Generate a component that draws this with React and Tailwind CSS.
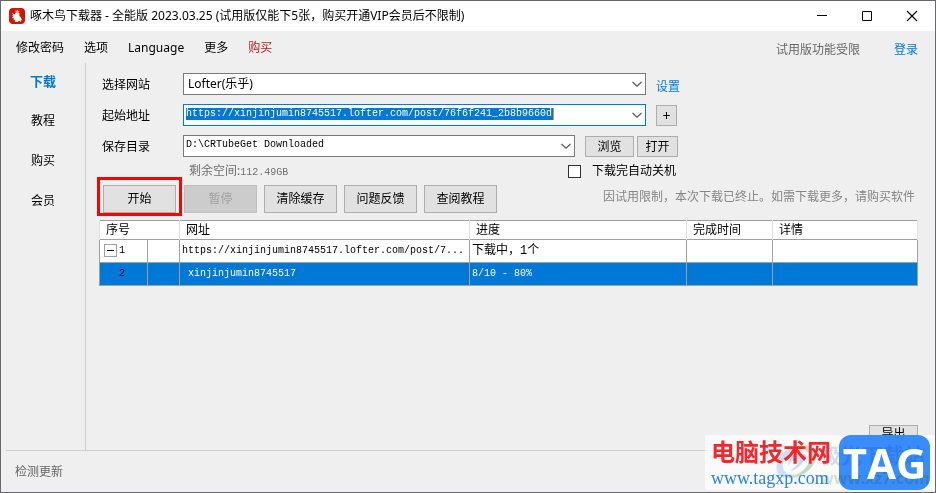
import React from "react";

const mono = "font-['Liberation_Mono','Noto_Sans_CJK_SC',monospace] text-[10px]";
const buttonLook = "border border-[#adadad] bg-[#e1e1e1] text-center text-black";

function Chevron() {
  return (
    <svg aria-hidden="true" className="pointer-events-none h-2 w-3 shrink-0" viewBox="0 0 12 8" fill="none" stroke="#555" strokeWidth="1.2">
      <path d="M1.5 2 L6 6.2 L10.5 2" />
    </svg>
  );
}

function Logo() {
  return (
    <svg aria-hidden="true" className="h-4 w-4 shrink-0" viewBox="0 0 16 16">
      <path fill="#d01608" d="M3 0h10l2 1 1 2v10l-1 2-2 1H3l-2-1-1-2V3l1-2z" />
      <path fill="#fff" d="M3 5l3 1.500L6.500 4.500 9 4l1.500 1.500L10.300 8l1.400 1.200 1.300 3-1.200-.2.200 2-1.700-1.200L8.500 14H5.500l1-1.600L4.300 11.600 5.300 10.500 2.500 9.500l2.200-.8L2.600 7.400l2 .1z" />
      <path fill="#ffc24a" d="M6 2l1.200 1 1-1.400 1 1.400 1.300-.6L10 4.200H7z" />
    </svg>
  );
}

function TitleBar() {
  return (
    <header className="flex h-[30px] items-center justify-between bg-white pl-2">
      <div className="flex items-center gap-[5px]">
        <Logo />
        <h1 className="whitespace-nowrap">啄木鸟下载器 - 全能版 2023.03.25 (试用版仅能下5张，购买开通VIP会员后不限制)</h1>
      </div>
      <div className="flex h-full">
        <button aria-label="最小化" className="flex w-[45px] items-center justify-center">
          <svg className="h-3 w-3" viewBox="0 0 12 12" stroke="#000" fill="none"><path d="M1 5.500H11" /></svg>
        </button>
        <button aria-label="最大化" className="flex w-[45px] items-center justify-center">
          <svg className="h-3 w-3" viewBox="0 0 12 12" stroke="#000" fill="none"><path d="M1.500 1.500h9v9h-9z" /></svg>
        </button>
        <button aria-label="关闭" className="flex w-[46px] items-center justify-center">
          <svg className="h-3 w-3" viewBox="0 0 12 12" stroke="#000" strokeWidth="1.100" fill="none"><path d="M1 1l10 10M11 1L1 11" /></svg>
        </button>
      </div>
    </header>
  );
}

function MenuBar() {
  return (
    <nav className="flex h-8 items-center justify-between pt-[2px] pr-[17px] pl-[15px]">
      <div className="flex gap-5">
        <button>修改密码</button>
        <button>选项</button>
        <button>Language</button>
        <button>更多</button>
        <button className="text-[#b22222]">购买</button>
      </div>
      <div className="flex gap-[34px] pt-1">
        <span className="text-[#666]">试用版功能受限</span>
        <a href="#login" className="text-[#0078e8]">登录</a>
      </div>
    </nav>
  );
}

function SideBar() {
  return (
    <nav className="flex w-[85px] shrink-0 flex-col border-r border-[#cfcfcf] text-center">
      <button className="h-[38px] text-[13px] font-bold text-[#0078d7]">下载</button>
      <button className="h-10">教程</button>
      <button className="h-10">购买</button>
      <button className="h-10">会员</button>
    </nav>
  );
}

function FormRows() {
  return (
    <div className="grid auto-rows-[22px] grid-cols-[81px_463px_1fr] gap-y-[9px] pl-4">
      <label htmlFor="site" className="leading-6">选择网站</label>
      <div className="flex h-[22px] items-center border border-[#7a7a7a] bg-white pr-[2px]">
        <select id="site" className="h-full min-w-0 flex-1 appearance-none pl-1 font-['Noto_Sans','Noto_Sans_CJK_SC',sans-serif] text-xs">
          <option>Lofter(乐乎)</option>
        </select>
        <Chevron />
      </div>
      <a href="#settings" className="pl-[10px] leading-[28px] text-[#0078e8]">设置</a>

      <label htmlFor="url" className="leading-6">起始地址</label>
      <div className="flex h-[22px] items-center justify-between border border-[#0078d7] bg-white pr-[2px] pl-[2px]">
        <input id="url" defaultValue="https://xinjinjumin8745517.lofter.com/post/76f6f241_2b8b9660d" className={`mb-[2px] h-3 w-[368px] border-r border-[#ff8728] bg-[#0078d7] leading-3 text-white outline-none ${mono}`} />
        <Chevron />
      </div>
      <div className="pt-px pl-[10px]">
        <button aria-label="添加" className={`h-[21px] w-[21px] text-[14px] leading-4 ${buttonLook}`}>+</button>
      </div>

      <label htmlFor="folder" className="leading-6">保存目录</label>
      <div className="col-span-2 flex items-end">
        <div className="flex h-[22px] w-[392px] items-center border border-[#7a7a7a] bg-white pr-[2px] pl-[2px]">
          <input id="folder" defaultValue="D:\CRTubeGet Downloaded" className={`mb-[2px] h-3 min-w-0 flex-1 leading-3 outline-none ${mono}`} />
          <Chevron />
        </div>
        <button className={`ml-[10px] h-[21px] w-[49px] leading-4 ${buttonLook}`}>浏览</button>
        <button className={`ml-[3px] h-[21px] w-[41px] leading-4 ${buttonLook}`}>打开</button>
      </div>
    </div>
  );
}

function Actions() {
  const base = "h-7 w-[73px] border text-center";
  return (
    <div className="flex h-[43px] items-start justify-between pr-5 pl-[11px]">
      <div className="flex items-center">
        <div className="flex h-[39px] w-[85px] items-end justify-center border-[3px] border-[#f00]">
          <button className={`${base} border-[#adadad] bg-[#e1e1e1]`}>开始</button>
        </div>
        <button disabled className={`${base} mt-1 ml-[2px] border-[#bfbfbf] bg-[#ccc] text-[#a0a0a0]`}>暂停</button>
        <div className="mt-1 ml-[7px] flex gap-[7px]">
          <button className={`${base} border-[#adadad] bg-[#e1e1e1]`}>清除缓存</button>
          <button className={`${base} border-[#adadad] bg-[#e1e1e1]`}>问题反馈</button>
          <button className={`${base} border-[#adadad] bg-[#e1e1e1]`}>查阅教程</button>
        </div>
      </div>
      <p className="leading-10 text-[#858585]">因试用限制，本次下载已终止。如需下载更多，请购买软件</p>
    </div>
  );
}

function Tasks() {
  const cell = "border border-[#a0a0a0] p-0 pl-[2px]";
  const head = "border-x border-x-[#e2e2e2] p-0 pl-[6px] text-left font-normal";
  return (
    <div className="pr-[17px] pl-[13px]">
      <table className="w-full table-fixed border-collapse border border-[#a0a0a0] bg-white">
        <colgroup>
          <col className="w-12" />
          <col className="w-8" />
          <col className="w-[290px]" />
          <col className="w-[217px]" />
          <col className="w-[86px]" />
          <col />
        </colgroup>
        <thead>
          <tr className="h-[19px] leading-[18px]">
            <th colSpan="2" className={head}>序号</th>
            <th className={head}>网址</th>
            <th className={head}>进度</th>
            <th className={head}>完成时间</th>
            <th className={head}>详情</th>
          </tr>
        </thead>
        <tbody>
          <tr className={`h-[23px] ${mono}`}>
            <td className={cell}>
              <div className="flex items-center gap-[2px] pl-[2px]">
                <button aria-label="折叠" className="flex h-[13px] w-[13px] items-center justify-center border border-[#a0a0a0]">
                  <span className="h-px w-[7px] bg-black" />
                </button>
                1
              </div>
            </td>
            <td className={cell} />
            <td className={cell}>https://xinjinjumin8745517.lofter.com/post/7...</td>
            <td className={`${cell} text-xs`}>下载中，1个</td>
            <td className={cell} />
            <td className={cell} />
          </tr>
          <tr className={`h-[23px] bg-[#0078d7] text-white ${mono}`}>
            <td className={`${cell} text-black`}><span className="pl-[17px]">2</span></td>
            <td className={cell} />
            <td className={cell}><span className="pl-[6px]">xinjinjumin8745517</span></td>
            <td className={cell}>8/10 - 80%</td>
            <td className={cell} />
            <td className={cell} />
          </tr>
        </tbody>
      </table>
    </div>
  );
}

function Watermark() {
  return (
    <div className="pointer-events-none absolute right-0 bottom-[2px] h-[55px] w-[230px] overflow-hidden bg-white/70">
      <div className="absolute top-0 left-[134px] h-[55px] w-[91px] rounded-[12px] bg-[#2480fb]/90" />
      <svg aria-hidden="true" className="absolute top-[9px] left-[70px] h-9 w-12" viewBox="0 0 48 36">
        <path fill="#cfe0f3" d="M2 27C-1 14 9 4 26 1 14 7 6 15 8 24c2 8 16 9 23 2-6 9-25 12-29 1z" />
        <path fill="#c2dcc0" d="M20 3c13-4 23 1 21 11-2 11-15 20-27 20 10-3 20-11 21-19 1-7-6-11-15-12z" />
        <path fill="#c5d9ef" d="M13 22c1-9 8-14 16-12 3 1 2 5-1 8-3 4-8 8-13 9 4-3 10-8 10-12-4-1-9 2-12 7z" />
      </svg>
      <div className="absolute top-2 left-[115px] text-[21px] leading-6 font-bold whitespace-nowrap text-[#d6e4f3] mix-blend-multiply">极光下载站</div>
      <div className="absolute top-[33px] left-[115px] text-[16px] leading-5 font-bold whitespace-nowrap text-[#d5e9d3] mix-blend-multiply">www.xz7.com</div>
      <div className="absolute top-0 left-[134px] flex h-[55px] w-[91px] items-center justify-center font-['Open_Sans',sans-serif] text-[42px] leading-none font-bold text-white">TAG</div>
      <div className="absolute top-1 left-[6px] text-[24px] leading-[26px] font-bold whitespace-nowrap text-[#f8252b]">电脑技术网</div>
      <div className="absolute top-[33px] left-[6px] font-['Liberation_Serif',serif] text-[18px] leading-5 text-[#2b80e8]">www.tagxp.com</div>
    </div>
  );
}

export default function App() {
  return (
    <div className="relative flex min-h-screen flex-col border border-[#68686a] bg-[#efefef] font-['Noto_Sans','Noto_Sans_CJK_SC',sans-serif] text-xs text-black">
      <TitleBar />
      <MenuBar />
      <div className="flex flex-1">
        <SideBar />
        <main className="flex min-w-0 flex-1 flex-col pt-[10px]">
          <FormRows />
          <div className="flex h-5 items-center pt-2 pl-[103px]">
            <span className="w-[379px] text-[#707070]">剩余空间:<span className={mono}>112.49GB</span></span>
            <label className="flex items-center gap-[11px]">
              <input type="checkbox" className="h-[13px] w-[13px] appearance-none border border-[#333] bg-white" />
              下载完自动关机
            </label>
          </div>
          <Actions />
          <Tasks />
          <div className="mt-auto flex justify-end pr-[17px] pb-1">
            <button className={`h-[21px] w-[49px] pb-1 leading-4 ${buttonLook}`}>导出</button>
          </div>
        </main>
      </div>
      <footer className="mx-[5px] flex h-[42px] items-center border-t border-[#cfcfcf] pl-[9px] text-[#666]">
        <button>检测更新</button>
      </footer>
      <Watermark />
    </div>
  );
}
